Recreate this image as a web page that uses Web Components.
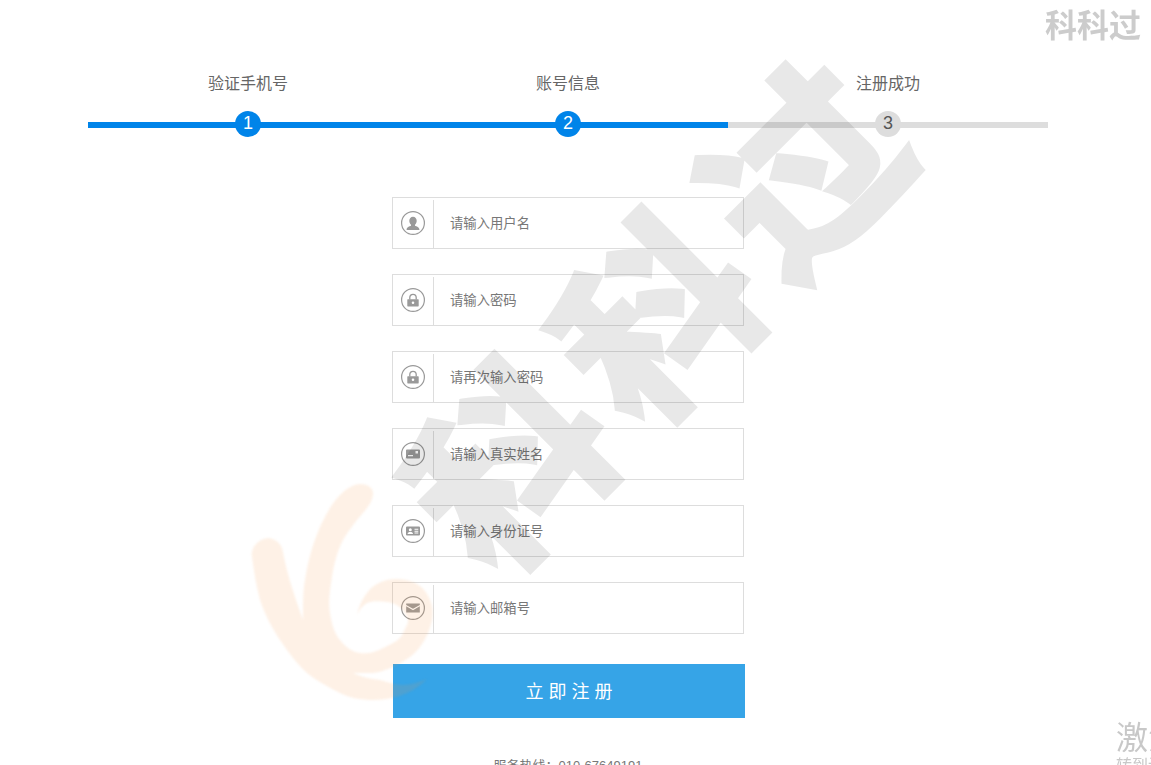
<!DOCTYPE html>
<html lang="zh">
<head>
<meta charset="utf-8">
<title>注册</title>
<style>
  html, body { margin: 0; height: 100%; overflow: hidden; background: #fff; }
  body { font-family: "Liberation Sans", "Noto Sans CJK SC", sans-serif; color: #666; }
  main { display: block; width: 1136px; }
  .colon { font-family: "Noto Sans CJK TC", sans-serif; }
</style>
</head>
<body>
<main>
  <step-bar>
    <step-item num="1" state="done">验证手机号</step-item>
    <step-item num="2" state="done">账号信息</step-item>
    <step-item num="3">注册成功</step-item>
  </step-bar>
  <reg-form>
    <form-row icon="user">请输入用户名</form-row>
    <form-row icon="lock">请输入密码</form-row>
    <form-row icon="lock">请再次输入密码</form-row>
    <form-row icon="card">请输入真实姓名</form-row>
    <form-row icon="id">请输入身份证号</form-row>
    <form-row icon="mail">请输入邮箱号</form-row>
    <submit-button>立即注册</submit-button>
  </reg-form>
  <service-line>服务热线<span class="colon">：</span>010-67649191</service-line>
</main>
<water-marks></water-marks>

<script>
// Icon glyphs, drawn in a 24x24 box inside the ring
const ICONS = {
  user: `<path d="M12 5.800c2.200 0 3.700 1.700 3.700 4 0 1.700-.8 3.100-1.700 3.900v1c1.500.7 4.400 1.300 4.400 3.800v.5H5.600v-.5c0-2.500 2.900-3.100 4.400-3.800v-1c-.9-.8-1.700-2.200-1.700-3.900 0-2.300 1.500-4 3.700-4z"/>`,
  lock: `<path fill="none" stroke="#999" stroke-width="1.300" d="M8.800 11.500V9.500a3.200 3.200 0 0 1 6.400 0v2"/><path fill-rule="evenodd" d="M6.900 11.200h10.200a.6.6 0 0 1 .6.600v6a.6.6 0 0 1-.6.600H6.900a.6.6 0 0 1-.6-.6v-6a.6.6 0 0 1 .6-.6zM12 13.500a1.300 1.300 0 1 0 0 2.600 1.300 1.300 0 0 0 0-2.600z"/>`,
  card: `<path fill-rule="evenodd" d="M6 7.500h12a1 1 0 0 1 1 1v7a1 1 0 0 1-1 1H6a1 1 0 0 1-1-1v-7a1 1 0 0 1 1-1zM14.500 9v2.500H17V9zM7 13v1.300h5V13z"/>`,
  id: `<path fill-rule="evenodd" d="M6 7.500h12a1 1 0 0 1 1 1v7a1 1 0 0 1-1 1H6a1 1 0 0 1-1-1v-7a1 1 0 0 1 1-1zM9.300 9.300a1.500 1.500 0 1 0 0 3 1.500 1.500 0 0 0 0-3zM6.600 15h5.400c0-1.400-1.200-2-2.700-2s-2.700.6-2.700 2zM13.500 9.800v1h3.800v-1zM13.500 11.700v1h3.800v-1zM13.500 13.600v1h3.800v-1z"/>`,
  mail: `<path d="M5.200 7.600h13.600v1.300L12 12.800 5.200 8.900z"/><path d="M5.200 10.300 12 14.200l6.800-3.900v6.100H5.200z"/>`
};

class StepBar extends HTMLElement {
  constructor() {
    super();
    this.attachShadow({ mode: "open" });
    this.shadowRoot.innerHTML = `
      <style>
        :host { display: flex; width: 960px; margin: 0 auto; padding-top: 73px; }
      </style>
      <slot></slot>`;
  }
}

class StepItem extends HTMLElement {
  constructor() {
    super();
    this.attachShadow({ mode: "open" });
    const done = this.getAttribute("state") === "done";
    this.shadowRoot.innerHTML = `
      <style>
        :host { display: block; flex: 1; text-align: center; }
        .label { height: 22px; line-height: 22px; font-size: 16px; color: #666; margin-bottom: 16px; }
        .track { display: grid; place-items: center; height: 26px; }
        .bar { grid-area: 1 / 1; width: 100%; height: 6px; margin-top: 2px; background: ${done ? "#0084e9" : "#ddd"}; }
        .dot {
          grid-area: 1 / 1; width: 26px; height: 26px; border-radius: 50%; line-height: 25px; font-size: 18px;
          background: ${done ? "#0084e9" : "#ddd"}; color: ${done ? "#fff" : "#555"};
        }
      </style>
      <div class="label"><slot></slot></div>
      <div class="track"><div class="bar"></div><div class="dot">${this.getAttribute("num")}</div></div>`;
  }
}

class RegForm extends HTMLElement {
  constructor() {
    super();
    this.attachShadow({ mode: "open" });
    this.shadowRoot.innerHTML = `
      <style>
        :host { display: flex; flex-direction: column; gap: 25px; width: 352px; margin: 60px auto 0; }
      </style>
      <slot></slot>`;
  }
}

class FormRow extends HTMLElement {
  constructor() {
    super();
    this.attachShadow({ mode: "open" });
    const icon = ICONS[this.getAttribute("icon")];
    this.shadowRoot.innerHTML = `
      <style>
        :host { display: flex; box-sizing: border-box; height: 52px; border: 1px solid #ddd; }
        .icon { display: flex; align-items: center; justify-content: center; box-sizing: border-box; width: 41px; height: 48px; margin-top: 2px; border-right: 1px solid #ddd; }
        .icon svg { display: block; width: 24px; height: 24px; fill: #999; margin: 0 1px 2px 0; }
        .text { align-self: center; padding-left: 16px; margin-bottom: 2px; font-size: 13.33px; color: #777; }
      </style>
      <div class="icon">
        <svg viewBox="0 0 24 24"><circle cx="12" cy="12" r="11.400" fill="none" stroke="#999" stroke-width="1.200"/>${icon}</svg>
      </div>
      <div class="text"><slot></slot></div>`;
  }
}

class SubmitButton extends HTMLElement {
  constructor() {
    super();
    this.attachShadow({ mode: "open" });
    this.shadowRoot.innerHTML = `
      <style>
        :host { display: block; width: 352px; height: 54px; margin: 5px 0 0 1px; }
        button {
          display: block; width: 100%; height: 100%; border: 0; padding: 0 0 2px 5px; background: #36a4e7; color: #fff;
          font: 18px "Liberation Sans", "Noto Sans CJK SC", sans-serif; letter-spacing: 5px;
        }
      </style>
      <button type="button"><slot></slot></button>`;
  }
}

class ServiceLine extends HTMLElement {
  constructor() {
    super();
    this.attachShadow({ mode: "open" });
    this.shadowRoot.innerHTML = `
      <style>
        :host { display: block; margin-top: 37px; text-align: center; font-size: 13px; line-height: 20px; color: #777; }
      </style>
      <slot></slot>`;
  }
}

// Everything that lies over the page: the big diagonal stamp, the swirl, the corner marks
class WaterMarks extends HTMLElement {
  constructor() {
    super();
    this.attachShadow({ mode: "open" });
    this.shadowRoot.innerHTML = `
      <style>
        :host { position: fixed; inset: 0; overflow: hidden; pointer-events: none; display: block; }
        .stamp {
          position: absolute; left: 661px; top: 322px; transform: translate(-50%, -50%) rotate(-45deg);
          font-size: 190px; line-height: 1; font-weight: 700; white-space: nowrap; letter-spacing: 18px; padding-left: 18px;
          color: #000; -webkit-text-stroke: 7px #000; opacity: .09;
        }
        .swirl { position: absolute; left: 240px; top: 470px; width: 220px; height: 240px; filter: blur(1px); }
        .corner { position: absolute; left: 1045px; top: 6px; font-size: 32px; line-height: 40px; font-weight: 700; color: #ccc; white-space: nowrap; }
        .activate { position: absolute; left: 1116px; top: 718px; color: #c8c8c8; white-space: nowrap; }
        .activate div:first-child { font-size: 32px; line-height: 40px; }
        .activate div:last-child { font-size: 16px; line-height: 20px; margin-top: -2px; }
      </style>
      <div class="stamp">科科过</div>
      <svg class="swirl" viewBox="240 470 220 240">
        <path fill="rgb(245,150,60)" fill-opacity=".13" d="M252 557C250 548 258 539 268 538C277 539 282 545 283 552C286 568 290 583 303 620C303 600 303 590 305 580C308 560 313 543 320 527C327 512 333 502 340 495C347 488 354 484 360 484C369 484 374 489 373 495C372 502 368 507 363 513C355 522 349 530 343 540C337 552 334 564 332 577C330 590 328 602 330 613C332 626 335 634 340 640C346 648 353 652 360 653C369 654 376 652 383 648C393 643 401 640 403 633C406 626 410 622 407 617C403 608 396 603 387 602C378 601 372 601 367 603C362 606 359 610 357 615C359 606 362 599 367 593C372 586 379 582 387 580C396 578 405 579 413 582C422 586 427 592 430 600C433 607 433 613 432 620C430 630 426 639 420 647C414 655 406 660 397 665C389 669 381 672 373 673L353 673C362 677 371 679 380 680C388 682 396 685 403 685C411 685 419 682 427 679C421 685 414 690 407 693C396 698 385 700 373 700C361 700 350 698 340 693C328 687 317 681 307 673C297 664 288 652 280 640C272 628 265 615 260 600C256 585 254 572 252 557Z"/>
      </svg>
      <div class="corner">科科过</div>
      <div class="activate"><div>激活 Windows</div><div>转到设置以激活 Windows</div></div>`;
  }
}

customElements.define("step-bar", StepBar);
customElements.define("step-item", StepItem);
customElements.define("reg-form", RegForm);
customElements.define("form-row", FormRow);
customElements.define("submit-button", SubmitButton);
customElements.define("service-line", ServiceLine);
customElements.define("water-marks", WaterMarks);
</script>
</body>
</html>
